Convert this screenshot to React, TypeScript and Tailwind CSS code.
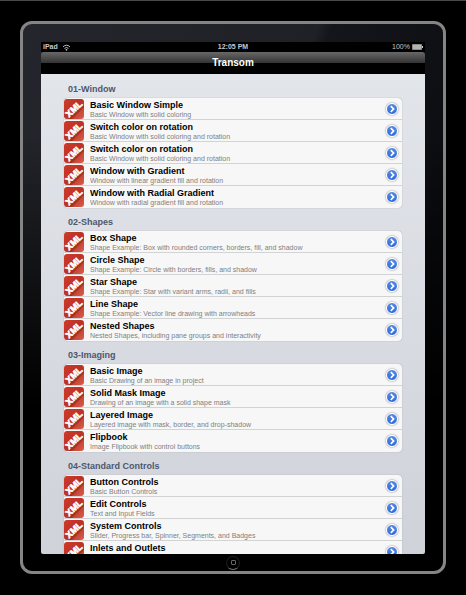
import { useId } from "react";

type Item = { title: string; detail?: string };
type Group = { name: string; items: Item[] };

const groups: Group[] = [
  {
    name: "01-Window",
    items: [
      { title: "Basic Window Simple", detail: "Basic Window with solid coloring" },
      { title: "Switch color on rotation", detail: "Basic Window with solid coloring and rotation" },
      { title: "Switch color on rotation", detail: "Basic Window with solid coloring and rotation" },
      { title: "Window with Gradient", detail: "Window with linear gradient fill and rotation" },
      { title: "Window with Radial Gradient", detail: "Window with radial gradient fill and rotation" },
    ],
  },
  {
    name: "02-Shapes",
    items: [
      { title: "Box Shape", detail: "Shape Example: Box with rounded corners, borders, fill, and shadow" },
      { title: "Circle Shape", detail: "Shape Example: Circle with borders, fills, and shadow" },
      { title: "Star Shape", detail: "Shape Example: Star with variant arms, radii, and fills" },
      { title: "Line Shape", detail: "Shape Example: Vector line drawing with arrowheads" },
      { title: "Nested Shapes", detail: "Nested Shapes, including pane groups and interactivity" },
    ],
  },
  {
    name: "03-Imaging",
    items: [
      { title: "Basic Image", detail: "Basic Drawing of an image in project" },
      { title: "Solid Mask Image", detail: "Drawing of an image with a solid shape mask" },
      { title: "Layered Image", detail: "Layered image with mask, border, and drop-shadow" },
      { title: "Flipbook", detail: "Image Flipbook with control buttons" },
    ],
  },
  {
    name: "04-Standard Controls",
    items: [
      { title: "Button Controls", detail: "Basic Button Controls" },
      { title: "Edit Controls", detail: "Text and Input Fields" },
      { title: "System Controls", detail: "Slider, Progress bar, Spinner, Segments, and Badges" },
      { title: "Inlets and Outlets" },
    ],
  },
];

function XmlIcon() {
  const id = useId();
  return (
    <svg viewBox="0 0 20 20" className="size-5 shrink-0" aria-hidden="true">
      <defs>
        <linearGradient id={id} x1="0" y1="0" x2="1" y2="1">
          <stop offset="0" stopColor="#cf3a2a" />
          <stop offset="0.5" stopColor="#bb3226" />
          <stop offset="1" stopColor="#d9604c" />
        </linearGradient>
      </defs>
      <rect width="20" height="20" rx="3" fill={`url(#${id})`} />
      <path d="M4 20L20 5V8L8 20Z" fill="#7d1f17" opacity="0.45" />
      <text
        transform="rotate(-43 10 10)"
        x="10"
        y="13"
        textAnchor="middle"
        fontSize="9"
        fontWeight="700"
        fill="#fff"
        stroke="#fff"
        strokeWidth="0.6"
      >
        XML
      </text>
    </svg>
  );
}

function Disclosure({ label }: { label: string }) {
  return (
    <button
      type="button"
      aria-label={`Open ${label}`}
      className="flex size-3 shrink-0 items-center justify-center rounded-full border border-white bg-linear-to-b from-[#5a8ade] to-[#2a6ae0] shadow-[0_0_2px_#666]"
    >
      <svg viewBox="0 0 8 8" className="size-2" aria-hidden="true">
        <path d="M2.8 1.2L5.6 4L2.8 6.8" fill="none" stroke="#fff" strokeWidth="1.7" />
      </svg>
    </button>
  );
}

function Row({ item }: { item: Item }) {
  return (
    <li className="flex h-[22px] items-center border-b border-[#d2d3d5] pr-1 last:border-b-0">
      <XmlIcon />
      <div className="h-5 min-w-0 flex-1 pl-[6px]">
        <h3 className="truncate text-[9px] leading-3 font-bold text-black">{item.title}</h3>
        {item.detail && <p className="truncate text-[7px] leading-2 text-[#808080]">{item.detail}</p>}
      </div>
      <Disclosure label={item.title} />
    </li>
  );
}

function StatusBar() {
  return (
    <div className="grid h-[10px] shrink-0 grid-cols-3 items-center bg-black px-[2px] text-[7px] leading-[10px] font-bold text-[#c8c8c8]">
      <div className="flex items-center gap-1">
        <span>iPad</span>
        <svg viewBox="0 0 10 8" className="h-[7px] w-[9px]" aria-label="Wi-Fi">
          <path d="M1 3.2Q5 -0.4 9 3.2M2.8 5Q5 3 7.2 5" fill="none" stroke="#c8c8c8" strokeWidth="1.1" />
          <circle cx="5" cy="6.6" r="1" fill="#c8c8c8" />
        </svg>
      </div>
      <span className="text-center">12:05 PM</span>
      <div className="flex items-center justify-end gap-[2px]">
        <span className="font-normal">100%</span>
        <svg viewBox="0 0 11 6" className="h-[6px] w-[11px]" aria-label="Battery full">
          <path d="M0.5 0.5H9.5V5.5H0.5Z" fill="#b4b4b4" stroke="#8a8a8a" />
          <path d="M10.5 2V4" stroke="#c8c8c8" />
        </svg>
      </div>
    </div>
  );
}

export default function App() {
  return (
    <div className="flex h-screen flex-col border-t border-[#4a4a4a] bg-black px-5 pt-5 pb-[21px] font-['Liberation_Sans',Arial,sans-serif]">
      <div className="flex min-h-0 flex-1 flex-col rounded-[12px] border-3 border-[#858585] bg-[linear-gradient(to_bottom,transparent_0%,transparent_20%,#000_70%),linear-gradient(115deg,#25262d_0%,#1f2126_44%,#14161b_46%,#0b0c10_75%)] px-[18px] pt-[18px]">
        <main className="flex min-h-0 flex-1 flex-col overflow-hidden">
          <StatusBar />
          <header className="flex h-[22px] shrink-0 items-center justify-center rounded-t-[3px] bg-[linear-gradient(to_bottom,#686868_0px,#333_11px,#000_11px)]">
            <h1 className="text-[10px] leading-3 font-bold text-white">Transom</h1>
          </header>
          <div className="min-h-0 flex-1 overflow-hidden rounded-b-[2px] bg-linear-to-b from-[#e2e5ea] to-[#d0d2da] px-[23px] pt-px">
            {groups.map((group) => (
              <section key={group.name}>
                <h2 className="flex h-[23px] items-center pt-1 pl-1 text-[9px] leading-3 font-bold text-[#4d576d]">
                  {group.name}
                </h2>
                <ul className="overflow-hidden rounded-[4px] bg-[#f7f7f7] shadow-[0_0_1px_#888]">
                  {group.items.map((item, index) => (
                    <Row key={index} item={item} />
                  ))}
                </ul>
              </section>
            ))}
          </div>
        </main>
        <footer className="flex h-[17px] shrink-0 items-center justify-center">
          <button
            type="button"
            aria-label="Home"
            className="flex size-[14px] items-center justify-center rounded-full border border-[#1c1c1c] border-b-[#777] bg-black"
          >
            <span className="size-[5px] rounded-[1px] border border-[#666]" />
          </button>
        </footer>
      </div>
    </div>
  );
}
